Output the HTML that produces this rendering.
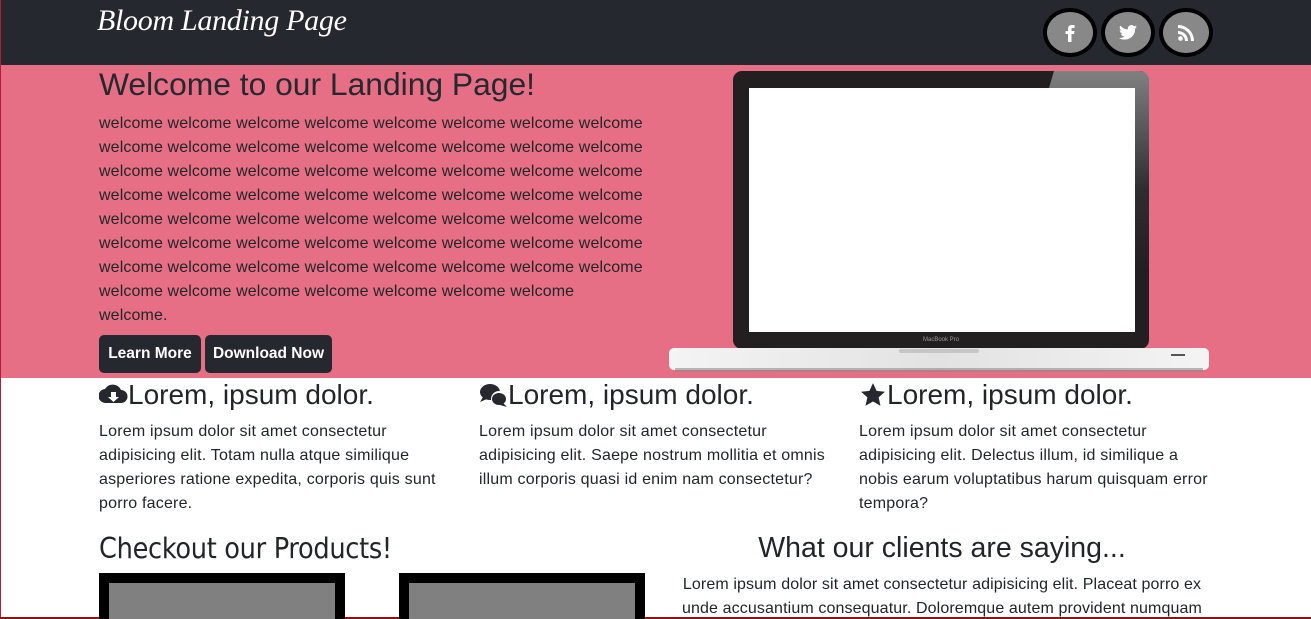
<!DOCTYPE html>
<html><head><meta charset="utf-8"><style>
*{box-sizing:border-box;margin:0;padding:0}
html,body{width:1311px;height:619px;overflow:hidden}
body{font-family:"Liberation Sans",sans-serif;color:#212529;background:#fff;position:relative;border-left:1px solid #b0203a;border-bottom:2px solid #8b1414}
.nav{position:absolute;left:0;top:0;width:1311px;height:65px;background:#25282e}
.logo{position:absolute;left:96px;top:4px;color:#fff;font-family:"Liberation Serif",serif;font-style:italic;font-size:30px;letter-spacing:-0.3px}
.soc{position:absolute;top:8px;width:54px;height:49px;border-radius:50%;border:4px solid #000;background:#888;display:flex;align-items:center;justify-content:center}
.hero{position:absolute;left:0;top:65px;width:1311px;height:313px;background:#e66f86}
h1{position:absolute;left:98px;top:65px;font-size:31.8px;font-weight:normal;line-height:38px;color:#25282e}
.wel{position:absolute;left:98px;top:112px;width:560px;font-size:16px;letter-spacing:0.12px;line-height:24px}
.btn{position:absolute;top:335px;height:38px;background:#25282e;color:#fff;font-weight:bold;font-size:15.5px;border-radius:5px;line-height:38px;text-align:center}
.col{position:absolute;top:378px;width:350px}
.col h2{font-size:28px;font-weight:normal;line-height:34px;display:flex;align-items:center}
.col p{font-size:16px;letter-spacing:0.2px;line-height:24px;margin-top:8px}
.prod{position:absolute;left:98px;top:531px;font-family:"DejaVu Sans Condensed","Liberation Sans",sans-serif;font-size:28.5px;line-height:36px;letter-spacing:-0.3px}
.box{position:absolute;top:573px;width:246px;height:60px;background:#808080;border:10px solid #000}
.cl{position:absolute;left:676px;top:530px;width:530px;text-align:center}
.cl h3{font-size:28.5px;font-weight:normal;line-height:36px}
.cl p{font-size:16px;letter-spacing:0.12px;line-height:24px;margin-top:7px}
</style></head><body>
<div class="nav">
<div class="logo">Bloom Landing Page</div>
<div class="soc" style="left:1042px"><svg width="12" height="18" viewBox="0 0 12 18"><path d="M4 18V10H1.5V7H4V5C4 2.5 5.3 1 8 1h2.5v3H8.7C7.8 4 7.5 4.4 7.5 5.2V7h3l-.5 3H7.5v8z" fill="#fff"/></svg></div>
<div class="soc" style="left:1100px"><svg width="18" height="15" viewBox="0 0 24 20"><path d="M24 2.4a10 10 0 0 1-2.8.8A5 5 0 0 0 23.3.5a10 10 0 0 1-3.1 1.2A4.9 4.9 0 0 0 11.8 6 14 14 0 0 1 1.7.9a4.9 4.9 0 0 0 1.5 6.6A4.9 4.9 0 0 1 1 6.9 4.9 4.9 0 0 0 4.9 11.8a5 5 0 0 1-2.2.1 4.9 4.9 0 0 0 4.6 3.4A9.9 9.9 0 0 1 0 17.3 14 14 0 0 0 7.5 19.5c9 0 14-7.5 14-14v-.6A10 10 0 0 0 24 2.4z" fill="#fff"/></svg></div>
<div class="soc" style="left:1158px"><svg width="16" height="16" viewBox="0 0 16 16"><circle cx="2.5" cy="13.5" r="2.3" fill="#fff"/><path d="M0 6a10 10 0 0 1 10 10H7A7 7 0 0 0 0 9zM0 0a16 16 0 0 1 16 16h-3A13 13 0 0 0 0 3z" fill="#fff"/></svg></div>
</div>
<div class="hero"></div>
<h1>Welcome to our Landing Page!</h1>
<div class="wel">welcome welcome welcome welcome welcome welcome welcome welcome welcome welcome welcome welcome welcome welcome welcome welcome welcome welcome welcome welcome welcome welcome welcome welcome welcome welcome welcome welcome welcome welcome welcome welcome welcome welcome welcome welcome welcome welcome welcome welcome welcome welcome welcome welcome welcome welcome welcome welcome welcome welcome welcome welcome welcome welcome welcome welcome welcome welcome welcome welcome welcome welcome welcome<br>welcome.</div>
<div class="btn" style="left:98px;width:102px">Learn More</div>
<div class="btn" style="left:204px;width:127px">Download Now</div>
<svg style="position:absolute;left:668px;top:70px" width="540" height="303" viewBox="0 0 540 303">
<defs><linearGradient id="g" x1="0" x2="1"><stop offset="0" stop-color="#f4f4f4"/><stop offset="0.5" stop-color="#e2e2e2"/><stop offset="1" stop-color="#f4f4f4"/></linearGradient>
<linearGradient id="gl" x1="0" y1="0" x2="0" y2="1"><stop offset="0" stop-color="#aaa"/><stop offset="0.6" stop-color="#333"/><stop offset="1" stop-color="#231f20"/></linearGradient></defs>
<rect x="64" y="1" width="416" height="278" rx="9" fill="#231f20"/>
<path d="M385 1 L470 1 Q480 1 480 10 L480 200 L466 200 L466 18 L380 18z" fill="url(#gl)" opacity="0.7"/>
<rect x="80" y="18" width="386" height="244" fill="#fff"/>
<text x="272" y="271" font-size="6" fill="#999" text-anchor="middle" font-family="Liberation Sans">MacBook Pro</text>
<rect x="0" y="278" width="540" height="22" rx="5" fill="url(#g)"/>
<rect x="230" y="279" width="80" height="4" rx="2" fill="#c6c6c6"/>
<rect x="502" y="284" width="14" height="2" fill="#555"/>
<rect x="6" y="298" width="528" height="4" fill="#8c8c8c" opacity="0.6"/>
</svg>
<div class="col" style="left:98px"><h2><svg width="29" height="24" viewBox="0 0 29 24"><path d="M7 20A7 7 0 0 1 6 6 9 9 0 0 1 22 7a6.5 6.5 0 0 1 0 13z" fill="#25282e"/><path d="M12 9h5v5h3l-5.5 5-5.5-5h3z" fill="#fff"/></svg>Lorem, ipsum dolor.</h2><p>Lorem ipsum dolor sit amet consectetur adipisicing elit. Totam nulla atque similique asperiores ratione expedita, corporis quis sunt porro facere.</p></div>
<div class="col" style="left:478px"><h2><svg width="29" height="26" viewBox="0 0 29 26"><ellipse cx="11" cy="10" rx="10" ry="8" fill="#25282e"/><path d="M4 15l-3 5 7-3z" fill="#25282e"/><circle cx="20" cy="17" r="8" fill="#fff"/><ellipse cx="20" cy="17" rx="7" ry="6" fill="#25282e"/><path d="M24 21l4 4-7-2z" fill="#25282e"/></svg>Lorem, ipsum dolor.</h2><p>Lorem ipsum dolor sit amet consectetur adipisicing elit. Saepe nostrum mollitia et omnis illum corporis quasi id enim nam consectetur?</p></div>
<div class="col" style="left:858px"><h2><svg width="28" height="26" viewBox="0 0 24 24"><path d="M12 1l3.3 7.2 7.7.8-5.8 5.2 1.7 7.7L12 18l-6.9 3.9 1.7-7.7L1 9l7.7-.8z" fill="#25282e"/></svg>Lorem, ipsum dolor.</h2><p>Lorem ipsum dolor sit amet consectetur adipisicing elit. Delectus illum, id similique a nobis earum voluptatibus harum quisquam error tempora?</p></div>
<div class="prod">Checkout our Products!</div>
<div class="box" style="left:98px"></div>
<div class="box" style="left:398px"></div>
<div class="cl"><h3>What our clients are saying...</h3><p>Lorem ipsum dolor sit amet consectetur adipisicing elit. Placeat porro ex unde accusantium consequatur. Doloremque autem provident numquam</p></div>
</body></html>
